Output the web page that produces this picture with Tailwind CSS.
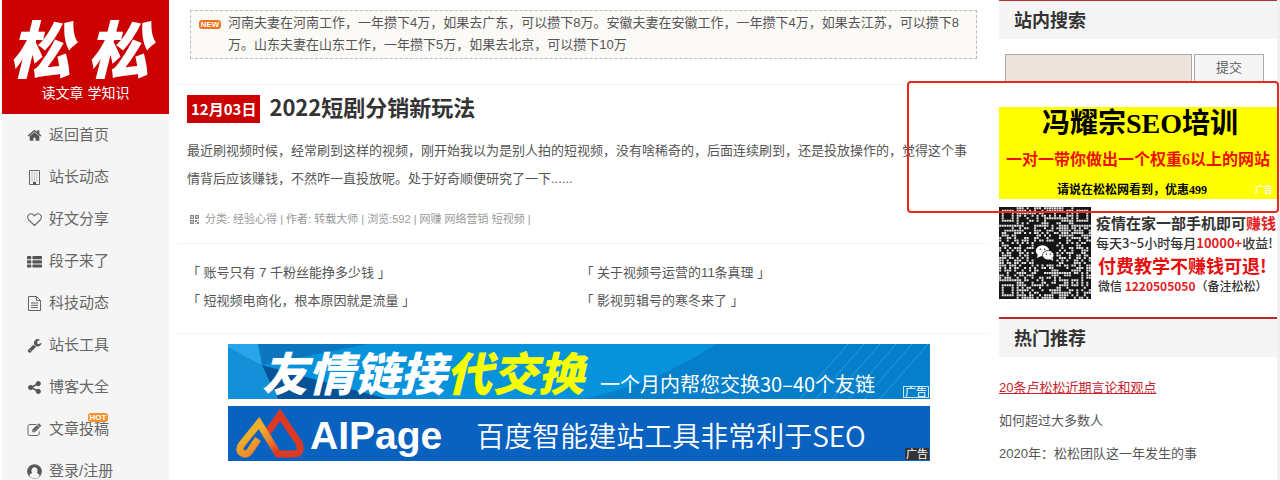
<!DOCTYPE html>
<html lang="zh-CN">
<head>
    <meta charset="UTF-8">
    <meta name="viewport" content="width=device-width, initial-scale=1">
    <title>松松 - 读文章 学知识</title>
    <script src="https://cdn.jsdelivr.net/npm/@tailwindcss/browser@4"></script>
</head>
<body class="min-h-screen bg-white font-['Liberation_Sans','Noto_Sans_CJK_SC',sans-serif] text-[13px] text-[#555]">
    <div class="flex min-h-screen border-r-3 border-[#f0f0f0] pl-0.5">

        <!-- Sidebar -->
        <aside class="w-[167px] shrink-0 bg-[#f5f5f5]">
            <a href="#" class="flex h-[114px] flex-col items-center bg-[#cb0102] pt-3 text-white">
                <span class="flex gap-4 pr-3 font-['Noto_Sans_CJK_SC',sans-serif] text-[62px] leading-[68px] font-black italic"><span>松</span><span>松</span></span>
                <span class="text-sm leading-[26px]">读文章 学知识</span>
            </a>
            <nav class="text-[15px] text-[#666]">
                <a href="#" class="flex h-[42px] items-center gap-[7px] pl-[25px]">
                    <svg class="size-[15px]" viewBox="0 0 1792 1792" fill="#555"><path d="M1472 992v480q0 26-19 45t-45 19h-384v-384h-256v384h-384q-26 0-45-19t-19-45v-480q0-1 .5-3t.5-3l575-474 575 474q1 2 1 6zm223-69l-62 74q-8 9-21 11h-3q-13 0-21-7l-692-577-692 577q-12 8-24 7-13-2-21-11l-62-74q-8-10-7-23.5t11-21.5l719-599q32-26 76-26t76 26l244 204v-195q0-14 9-23t23-9h192q14 0 23 9t9 23v408l219 182q10 8 11 21.5t-7 23.5z"/></svg>
                    返回首页
                </a>
                <a href="#" class="flex h-[42px] items-center gap-[7px] pl-[25px]">
                    <svg class="size-[15px]" viewBox="0 0 15 15" fill="none" stroke="#666"><path d="M2.5 .5h10v14h-10z"/><path d="M4.5 3h6M4.5 5h6M4.5 7h6M4.5 9h6M4.5 11h6" stroke-dasharray="1 1.4" stroke="#888"/><path d="M6 12h3v2.5H6z" fill="#555" stroke="none"/></svg>
                    站长动态
                </a>
                <a href="#" class="flex h-[42px] items-center gap-[7px] pl-[25px]">
                    <svg class="size-[15px]" viewBox="0 0 15 15" fill="none" stroke="#666" stroke-width="1.1" stroke-linejoin="round"><path d="M7.5 13.5L1.8 8C-.4 5.4.8 1.7 4 1.7c1.7 0 2.8 1.2 3.5 2.1.7-.9 1.8-2.1 3.5-2.1 3.2 0 4.4 3.7 2.2 6.3z"/></svg>
                    好文分享
                </a>
                <a href="#" class="flex h-[42px] items-center gap-[7px] pl-[25px]">
                    <svg class="size-[15px]" viewBox="0 0 15 15" fill="#555"><rect x="0" y="2" width="4.3" height="3.2" rx=".7"/><rect x="5.4" y="2" width="9.6" height="3.2" rx=".7"/><rect x="0" y="6.2" width="4.3" height="3.2" rx=".7"/><rect x="5.4" y="6.2" width="9.6" height="3.2" rx=".7"/><rect x="0" y="10.4" width="4.3" height="3.2" rx=".7"/><rect x="5.4" y="10.4" width="9.6" height="3.2" rx=".7"/></svg>
                    段子来了
                </a>
                <a href="#" class="flex h-[42px] items-center gap-[7px] pl-[25px]">
                    <svg class="size-[15px]" viewBox="0 0 15 15" fill="none" stroke="#666" stroke-linejoin="round"><path d="M1.5 .5H9.5L13.5 4.5V14.5H1.5z"/><path d="M9.5 .5v4h4M4 7h7M4 9.3h7M4 11.6h7"/></svg>
                    科技动态
                </a>
                <a href="#" class="flex h-[42px] items-center gap-[7px] pl-[25px]">
                    <svg class="size-[15px]" viewBox="0 0 1792 1792" fill="#555"><path d="M448 1472q0-26-19-45t-45-19-45 19-19 45 19 45 45 19 45-19 19-45zm644-420l-682 682q-37 37-90 37-52 0-91-37l-106-108q-38-36-38-90 0-53 38-91l681-681q39 98 114.5 173.5t173.5 114.5zm634-435q0 39-23 106-47 134-164.5 217.5t-258.5 83.5q-185 0-316.5-131.5t-131.5-316.5 131.5-316.5 316.5-131.5q58 0 121.5 16.5t107.5 46.5q16 11 16 28t-16 28l-293 169v224l193 107q5-3 79-48.5t135.5-81 70.5-35.5q15 0 23.5 10t8.5 25z"/></svg>
                    站长工具
                </a>
                <a href="#" class="flex h-[42px] items-center gap-[7px] pl-[25px]">
                    <svg class="size-[15px]" viewBox="0 0 15 15" fill="#555" stroke="#555"><path d="M11.3 3.8L3.8 7.5l7.5 3.7" fill="none" stroke-width="1.6"/><circle cx="11.3" cy="3.6" r="2.1"/><circle cx="3.6" cy="7.5" r="2.1"/><circle cx="11.3" cy="11.4" r="2.1"/></svg>
                    博客大全
                </a>
                <a href="#" class="relative flex h-[42px] items-center gap-[7px] pl-[25px]">
                    <svg class="size-[15px]" viewBox="0 0 15 15" fill="none" stroke="#666"><path d="M9.5 2.5H2.8Q1 2.5 1 4.3v7.4q0 1.8 1.8 1.8h7.6q1.8 0 1.8-1.8V9.5"/><path d="M5.3 10.2V7.6L11.9 1.2l2.5 2.5-6.6 6.5z" fill="#666" stroke="none"/><path d="M6.4 8.4l1.1 1.1M10.4 3.2l1.9 1.9" stroke="#f5f5f5" stroke-width=".7"/></svg>
                    文章投稿
                    <span class="absolute top-[5px] left-[86px] h-[9px] w-5 rounded-[3px] bg-[#f59331] text-center text-[8px] leading-[9px] font-bold text-white">HOT</span>
                </a>
                <a href="#" class="flex h-[42px] items-center gap-[7px] pl-[25px]">
                    <svg class="size-[15px]" viewBox="0 0 15 15"><circle cx="7.5" cy="7.5" r="6.8" fill="none" stroke="#555" stroke-width="1.1"/><path d="M2.4 12.3C2.8 10.3 4 9.5 5.2 9.4 3.3 7 4.5 3 7.5 3s4.2 4 2.3 6.4c1.2.1 2.4.9 2.8 2.9a7 7 0 0 1-10.2 0z" fill="#f5f5f5"/><path d="M7.5 1A6.5 6.5 0 0 0 2.3 11.4C2.9 10 4 9.5 5.1 9.3 3.6 7 4.6 3.2 7.5 3.2S11.4 7 9.9 9.3c1.1.2 2.2.7 2.8 2.1A6.5 6.5 0 0 0 7.5 1z" fill="#555"/></svg>
                    登录/注册
                </a>
            </nav>
        </aside>

        <!-- Main column -->
        <main class="ml-2 min-w-0 flex-1">
            <div class="mx-[13px] mt-2.5 flex h-[49px] gap-[7px] border border-dashed border-[#bbb] bg-[#fbfaf7] pt-px pl-2">
                <span class="mt-2 h-[9px] w-[22px] shrink-0 rounded-[3px] bg-[#f2731f] text-center text-[8px] leading-[9px] font-bold text-white">NEW</span>
                <p class="pr-2.5 leading-[22px]">河南夫妻在河南工作，一年攒下4万，如果去广东，可以攒下8万。安徽夫妻在安徽工作，一年攒下4万，如果去江苏，可以攒下8万。山东夫妻在山东工作，一年攒下5万，如果去北京，可以攒下10万</p>
            </div>

            <article class="mt-[25px] border-y border-[#f5f5f5] px-2.5 pb-[14px]">
                <h2 class="flex items-start gap-[9px] pt-2.5 font-['Noto_Sans_CJK_SC',sans-serif] font-bold">
                    <span class="bg-[#cb0102] px-1 text-[15px] leading-7 text-white">12月03日</span>
                    <a href="#" class="text-[22px] leading-[22px] text-[#333]">2022短剧分销新玩法</a>
                </h2>
                <p class="mt-[14px] pr-3 leading-7">最近刷视频时候，经常刷到这样的视频，刚开始我以为是别人拍的短视频，没有啥稀奇的，后面连续刷到，还是投放操作的，觉得这个事情背后应该赚钱，不然咋一直投放呢。处于好奇顺便研究了一下......</p>
                <p class="mt-4 flex items-center gap-1.5 pl-[3px] text-[11px] leading-5 text-[#999]">
                    <svg class="size-[9px]" viewBox="0 0 9 9" fill="#888"><path d="M0 0h4v4H0zM5 0h4v4H5zM0 5h4v4H0zM5 5h2v2H5zM7 7h2v2H7zM8 5h1v1H8zM5 8h1v1H5z"/><path d="M1 1h2v2H1zM6 1h2v2H6zM1 6h2v2H1z" fill="#ccc"/></svg>
                    <span>分类: 经验心得 | 作者: 转载大师 | 浏览:592 | 网赚 网络营销 短视频 |</span>
                </p>
            </article>

            <ul class="grid grid-cols-2 border-b border-[#f5f5f5] pt-[15px] pr-4 pb-[18px] pl-2.5 leading-7">
                <li><a href="#">「 账号只有 7 千粉丝能挣多少钱 」</a></li>
                <li><a href="#">「 关于视频号运营的11条真理 」</a></li>
                <li><a href="#">「 短视频电商化，根本原因就是流量 」</a></li>
                <li><a href="#">「 影视剪辑号的寒冬来了 」</a></li>
            </ul>

            <div class="mt-2.5 mr-[60px] ml-[51px] space-y-[7px]">
                <a href="#" class="relative flex h-[55px] items-center bg-[#0785d0] pl-[34px]">
                    <svg class="absolute inset-0 h-full w-full" viewBox="0 0 702 55" preserveAspectRatio="none">
                        <path d="M0 0h30l4 22L0 3z" fill="#27a5e8"/>
                        <path d="M0 4l34 17 18 34H0z" fill="#1390d8"/>
                        <path d="M34 21l126 34H50z" fill="#075296"/>
                        <path d="M30 0h110L35 21z" fill="#0c76be"/>
                        <path d="M140 0h348Q430 40 355 55H160L34 21z" fill="#0793dc"/>
                        <path d="M488 0h214v55H355Q430 40 488 0z" fill="#057fc9"/>
                        <path d="M572 55l48-55M588 55l48-55M604 55l48-55M620 55l48-55M636 55l48-55M652 55l48-55" stroke="#2b9bdc"/>
                    </svg>
                    <strong class="relative font-['Noto_Sans_CJK_SC',sans-serif] text-[46px] leading-[55px] font-black whitespace-nowrap text-white italic">友情链接<span class="text-[#f6ff00]">代交换</span></strong>
                    <span class="relative mt-6 ml-4 font-['Noto_Sans_CJK_SC',sans-serif] text-xl leading-6 whitespace-nowrap text-white">一个月内帮您交换30–40个友链</span>
                    <span class="absolute right-px bottom-px border border-[#bfe3f7] px-px text-[11px] leading-[10px] text-white">广告</span>
                </a>
                <a href="#" class="relative flex h-[55px] items-center bg-[#0a62c0] text-white">
                    <svg class="h-[55px] w-20 shrink-0" viewBox="0 0 80 55" fill="none" stroke-width="7">
                        <defs>
                            <linearGradient id="gold" x1="0" y1="0" x2="1" y2="1"><stop offset=".3" stop-color="#f0b02a"/><stop offset=".6" stop-color="#ee8a2c"/><stop offset=".9" stop-color="#dc3a24"/></linearGradient>
                        </defs>
                        <path d="M40 26L52 9l19 28q4 11-6 11H53" stroke="#dd3a25"/>
                        <path d="M54 48h-4L31 17 14 38q-4 6 0 9 4 3 8-2l8-12" stroke="url(#gold)"/>
                    </svg>
                    <strong class="ml-0.5 pt-1 text-[39px] leading-[51px]">AIPage</strong>
                    <span class="ml-[34px] pt-1 font-['Noto_Sans_CJK_SC',sans-serif] text-[28px] leading-[51px] font-[350] whitespace-nowrap">百度智能建站工具非常利于SEO</span>
                    <span class="absolute right-px bottom-px bg-[#333] px-px text-[11px] leading-3">广告</span>
                </a>
            </div>
        </main>

        <!-- Right column -->
        <aside class="relative ml-[9px] w-[278px] shrink-0">
            <h3 class="h-[39px] border-t border-[#a33] bg-[#f5f5f5] pl-[15px] text-lg leading-10 font-bold text-[#333]">站内搜索</h3>
            <form class="mt-[15px] flex h-7 gap-0.5 pl-1.5">
                <input type="text" aria-label="站内搜索" class="w-[187px] border border-[#aaa] bg-[#ede3dc] px-2">
                <button type="submit" class="w-[70px] border border-[#aaa] bg-[#f5f5f5] font-['Liberation_Serif','Noto_Sans_CJK_SC',serif] font-[350]">提交</button>
            </form>

            <a href="#" class="relative mt-[25px] block h-[92px] bg-[#ff0] text-center font-['Liberation_Serif','Noto_Sans_CJK_SC',serif] font-bold whitespace-nowrap text-black">
                <span class="block pt-px pl-1 text-[28px] leading-8">冯耀宗SEO培训</span>
                <span class="block pt-2 text-base leading-6 text-[#f01000]">一对一带你做出一个权重6以上的网站</span>
                <span class="block pt-2 pr-3 text-xs leading-5">请说在松松网看到，优惠499</span>
                <span class="absolute right-1 bottom-0.5 text-[9px] text-white">广告</span>
            </a>

            <a href="#" class="mt-2 flex h-[92px] gap-[5px] font-['Noto_Sans_CJK_SC',sans-serif] font-bold whitespace-nowrap text-[#333]">
                <svg id="qr" class="size-[92px] shrink-0" viewBox="0 0 37 37"></svg>
                <span class="pt-1.5">
                    <span class="block text-[15px] leading-5">疫情在家一部手机即可<span class="text-[#e3211f]">赚钱</span></span>
                    <span class="block text-[13px] leading-5 font-medium">每天3~5小时每月<span class="font-bold text-[#e3211f]">10000+</span>收益!</span>
                    <span class="block pl-0.5 text-lg leading-6 text-[#e60f0f]">付费教学不赚钱可退!</span>
                    <span class="block pl-0.5 text-xs leading-[18px] font-medium">微信 <span class="font-bold text-[#e3211f]">1220505050</span>（备注松松）</span>
                </span>
            </a>

            <h3 class="mt-[18px] h-10 border-t-2 border-[#b8252b] bg-[#f5f5f5] pl-[15px] text-lg leading-10 font-bold text-[#333]">热门推荐</h3>
            <ul class="mt-[14px] leading-[33px]">
                <li><a href="#" class="text-[#c7252b] underline">20条卢松松近期言论和观点</a></li>
                <li><a href="#">如何超过大多数人</a></li>
                <li><a href="#">2020年：松松团队这一年发生的事</a></li>
            </ul>

            <div class="pointer-events-none absolute top-[81px] -right-0.5 -left-[92px] h-[132px] rounded-[4px] border-2 border-[#e8291f]"></div>
        </aside>
    </div>

    <script>
        // QR code: finder corners, one alignment mark, the rest filled from a fixed seed
        const n = 37;
        let seed = 20221203;

        function next() {
            seed = (seed * 1103515245 + 12345) % 2147483648;
            return seed / 2147483648;
        }

        function ring(x, y, size) {
            const c = (size - 1) / 2;
            return Math.max(Math.abs(x - c), Math.abs(y - c));
        }

        function isLight(x, y) {
            const random = next() < 0.5;
            const right = x > n / 2;
            const bottom = y > n / 2;
            const fx = right ? n - 1 - x : x;
            const fy = bottom ? n - 1 - y : y;
            if (fx < 8 && fy < 8 && !(right && bottom)) {
                const r = ring(fx, fy, 7);
                return r === 2 || r === 4;
            }
            const a = Math.max(Math.abs(x - 30), Math.abs(y - 30));
            if (a <= 2) return a === 1;
            if (Math.abs(x - 18) < 5 && Math.abs(y - 18) < 5) return false;
            return random;
        }

        let d = '';
        for (let y = 0; y < n; y++) {
            for (let x = 0; x < n; x++) {
                if (isLight(x, y)) d += `M${x + 0.1} ${y + 0.1}h.8v.8h-.8z`;
            }
        }
        document.getElementById('qr').innerHTML = `
            <rect width="37" height="37" fill="#151515"/>
            <path d="${d}" fill="#e4e4e4"/>
            <g fill="#fff">
                <ellipse cx="17.5" cy="17.6" rx="2.7" ry="2.2"/>
                <path d="M15.6 19l-.3 1.5 1.7-.8z"/>
                <ellipse cx="19.8" cy="19.4" rx="2.3" ry="1.9" stroke="#151515" stroke-width=".3"/>
                <path d="M20.6 21l1.2.7-.2-1.2z"/>
            </g>
            <g fill="#151515">
                <circle cx="16.6" cy="17" r=".3"/><circle cx="18.4" cy="17" r=".3"/>
                <circle cx="19.1" cy="19" r=".25"/><circle cx="20.6" cy="19" r=".25"/>
            </g>`;
    </script>
</body>
</html>
